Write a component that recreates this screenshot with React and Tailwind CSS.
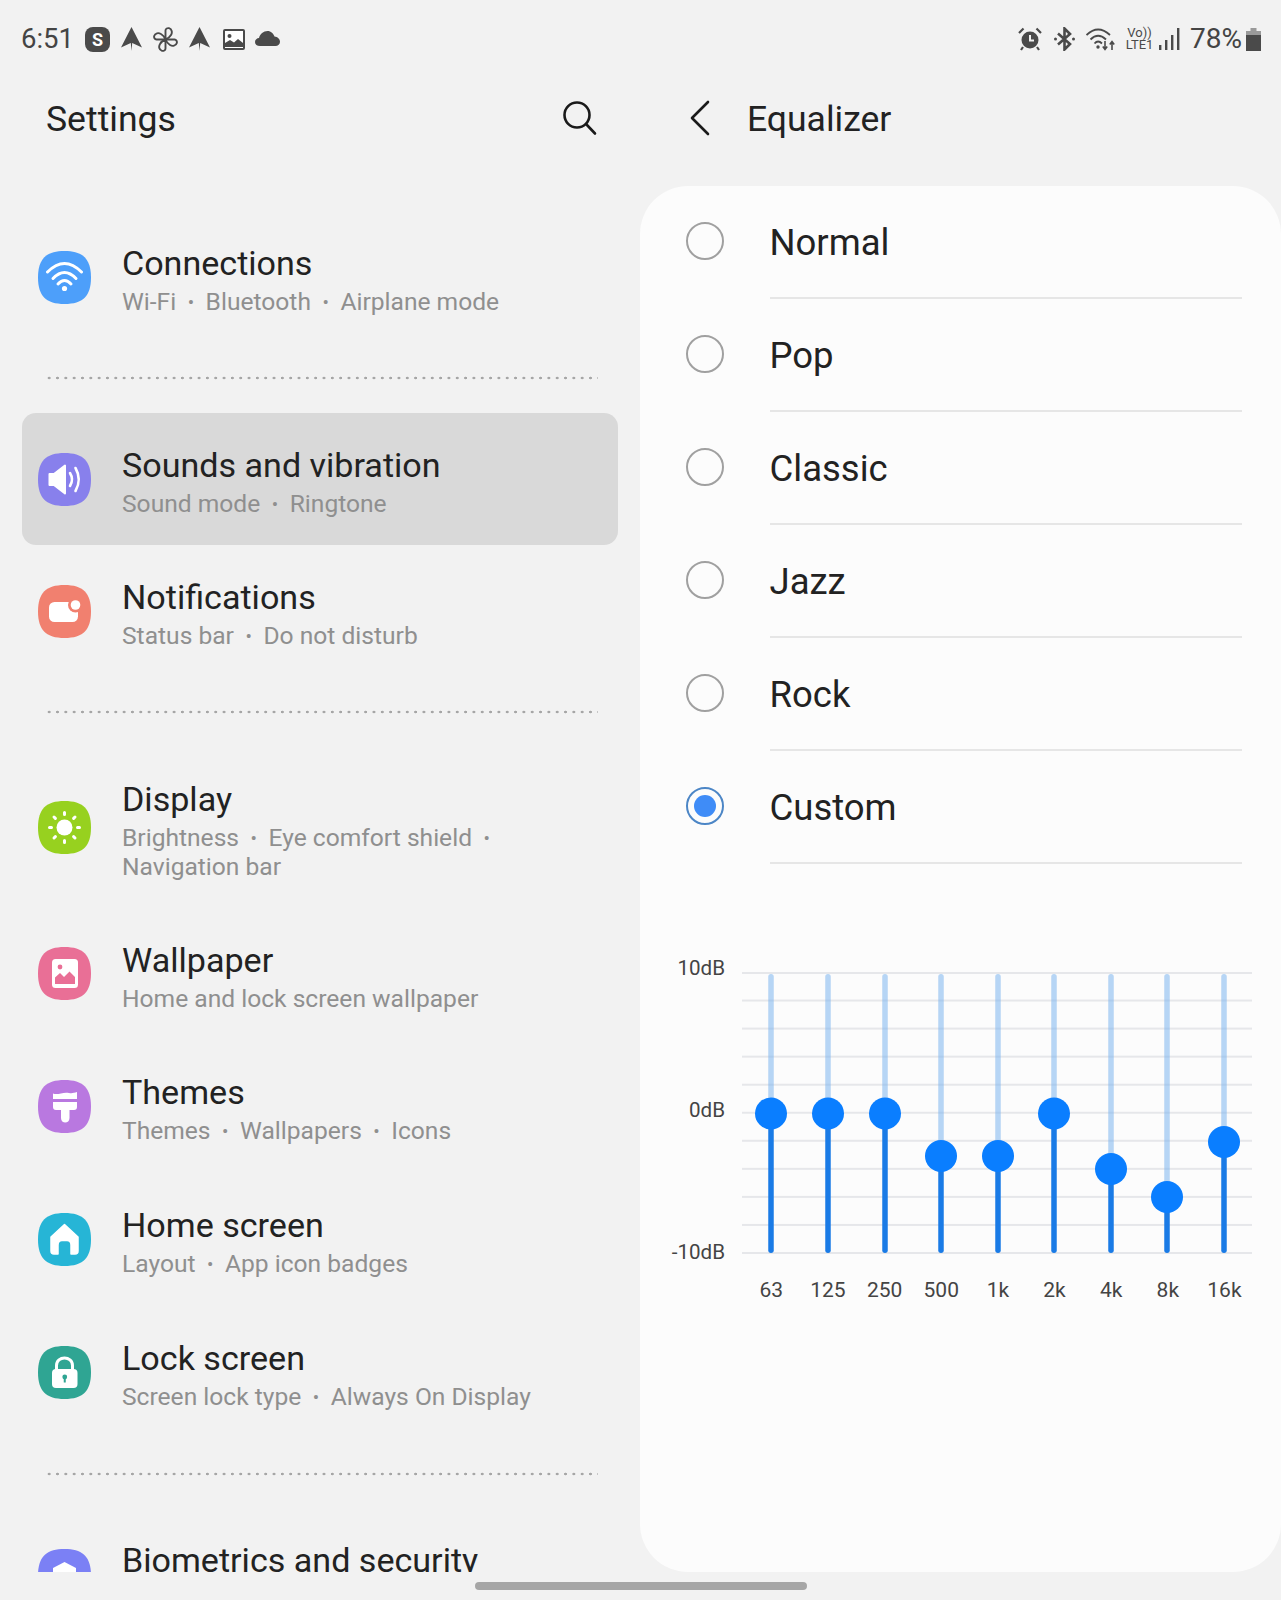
import React from "react";

const Squircle = ({ fill, children }) => (
  <svg width="53" height="53" viewBox="0 0 53 53" className="shrink-0">
    <path d="M26.5 0C45 0 53 8 53 26.5C53 45 45 53 26.5 53C8 53 0 45 0 26.5C0 8 8 0 26.5 0Z" fill={fill} />
    {children}
  </svg>
);

const icons = {
  wifi: (
    <Squircle fill="#4d9ffa">
      <g fill="none" stroke="#fff" strokeWidth="3" strokeLinecap="round">
        <path d="M9.5 21Q26.5 4 43.5 21" />
        <path d="M15 27.5Q26.5 15.5 38 27.5" />
        <path d="M20 33Q26.5 26 33 33" />
      </g>
      <circle cx="26.5" cy="37.5" r="2.6" fill="#fff" />
    </Squircle>
  ),
  sound: (
    <Squircle fill="#8880ec">
      <path d="M11.5 21H16L27 12.5V40.5L16 32H11.5Z" fill="#fff" stroke="#fff" strokeWidth="2" strokeLinejoin="round" />
      <g fill="none" stroke="#fff" strokeWidth="2.6" strokeLinecap="round">
        <path d="M32 20Q36 26.5 32 33" />
        <path d="M37.5 15Q44 26.5 37.5 38" />
      </g>
    </Squircle>
  ),
  notif: (
    <Squircle fill="#f1806f">
      <rect x="11" y="17" width="29" height="20" rx="5.5" fill="#fff" />
      <circle cx="37.5" cy="20" r="7.5" fill="#f1806f" />
      <circle cx="37.5" cy="20" r="4.8" fill="#fff" />
    </Squircle>
  ),
  display: (
    <Squircle fill="#97d11f">
      <circle cx="26.5" cy="26.5" r="8" fill="#fff" />
      <g stroke="#fff" strokeWidth="3" strokeLinecap="round">
        <path d="M26.5 11.5V13.5M26.5 39.5V41.5M11.5 26.5H13.5M39.5 26.5H41.5M16 16L17.4 17.4M35.6 35.6L37 37M37 16L35.6 17.4M17.4 35.6L16 37" />
      </g>
    </Squircle>
  ),
  wallpaper: (
    <Squircle fill="#e96f96">
      <rect x="14" y="12" width="26" height="29" rx="3.5" fill="#fff" />
      <circle cx="22" cy="20" r="2.4" fill="#e96f96" />
      <path d="M17 37V30.5L22 26L26 30L31.5 24.5L37 30V37Z" fill="#e96f96" />
    </Squircle>
  ),
  themes: (
    <Squircle fill="#b978e0">
      <path d="M15 13.5C20 15.5 25 11.5 31 13C34 13.5 36 13 39 12V19H15Z" fill="#fff" />
      <path d="M15 22H39V27C39 29 38 30 36 30H31.5V38C31.5 44 23 44 23 38V30H18C16 30 15 29 15 27Z" fill="#fff" />
    </Squircle>
  ),
  home: (
    <Squircle fill="#26b5d6">
      <path d="M26.5 11.5L40 24V38C40 40 39 41 37 41H33V32C33 29 31 27.5 29 27.5H24C22 27.5 20 29 20 32V41H16C14 41 13 40 13 38V24Z" fill="#fff" stroke="#fff" strokeWidth="1.5" strokeLinejoin="round" />
    </Squircle>
  ),
  lock: (
    <Squircle fill="#2fa593">
      <path d="M18.5 24V19.5C18.5 9.5 34.5 9.5 34.5 19.5V24" fill="none" stroke="#fff" strokeWidth="3" />
      <rect x="14" y="23" width="25.5" height="19" rx="4" fill="#fff" />
      <circle cx="26.75" cy="31" r="2.4" fill="#2fa593" />
      <rect x="25.75" y="31" width="2" height="5.5" fill="#2fa593" />
    </Squircle>
  ),
  bio: (
    <Squircle fill="#7b80f5">
      <path d="M15 19L26.5 13L38 19V53H15Z" fill="#fff" />
    </Squircle>
  ),
};

const Dots = () => (
  <div className="h-[4px] ml-[45px] w-[553px] bg-[radial-gradient(circle,#a6a6a6_1.2px,transparent_1.6px)] bg-[length:8.33px_4px]" />
);

const Sub = ({ parts }) => (
  <>
    {parts.map((p, i) => (
      <span key={i}>
        {i > 0 && <span className="mx-[11.5px] text-[19px] align-[1px]">•</span>}
        {p}
      </span>
    ))}
  </>
);

const Row = ({ icon, title, parts, h = "h-[133px]", active }) => (
  <div className={`ml-[22px] w-[596px] shrink-0 pl-[16px] flex items-center gap-[31px] rounded-[14px] ${h} ${active ? "bg-[#d9d9d9]" : ""}`}>
    {icons[icon]}
    <div className="min-w-0">
      <div className="text-[34.1px] leading-[50px] text-[#222] whitespace-nowrap">{title}</div>
      <div className="text-[24.6px] leading-[28px] text-[#8f8f8f] whitespace-nowrap">
        <Sub parts={parts} />
      </div>
    </div>
  </div>
);

const presets = ["Normal", "Pop", "Classic", "Jazz", "Rock", "Custom"];
const bands = [
  ["63", 771, 1113.5],
  ["125", 828, 1113.5],
  ["250", 885, 1113.5],
  ["500", 941, 1156],
  ["1k", 998, 1156],
  ["2k", 1054, 1113.5],
  ["4k", 1111, 1169],
  ["8k", 1167, 1197],
  ["16k", 1224, 1142],
];
const gridY = [0, 1, 2, 3, 4, 5, 6, 7, 8, 9, 10];

const Chart = () => (
  <svg width="511" height="284" viewBox="0 0 511 284" className="shrink-0">
    {gridY.map((i) => (
      <rect key={i} x="0" y={i === 0 ? 0 : i * 28.05 - 0.5} width="510" height="2" fill="#e6e7ea" />
    ))}
    {bands.map(([label, x, y]) => {
      const cx = x - 742;
      const cy = y - 972;
      return (
        <g key={label}>
          <rect x={cx - 2.75} y="2" width="5.5" height={cy} rx="2.75" fill="#7cb4ee" opacity="0.55" />
          <rect x={cx - 2.75} y={cy} width="5.5" height={281 - cy} rx="2.75" fill="#1a7be6" />
          <circle cx={cx} cy={cy} r="16" fill="#0a7eff" />
        </g>
      );
    })}
  </svg>
);

const Arrow = () => (
  <svg width="21" height="24" viewBox="0 0 21 24" className="shrink-0">
    <path d="M10.5 0L21 20.5L11.2 16L10.5 24L9.8 16L0 20.5Z" fill="#4a4a4a" />
  </svg>
);

const Pinwheel = () => (
  <svg width="25" height="25" viewBox="0 0 25 25" className="shrink-0">
    <g fill="none" stroke="#4a4a4a" strokeWidth="1.9" strokeLinejoin="round">
      {[0, 90, 180, 270].map((r) => (
        <path key={r} transform={`rotate(${r} 12.5 12.5)`} d="M12.5 12.5V3.5C12.5 1.6 14.5 0.8 16 1.2C19 2 19.5 5.5 18 8C17 9.8 15 11.5 12.5 12.5Z" />
      ))}
    </g>
  </svg>
);

export default function App() {
  return (
    <div className="w-[1281px] h-[1600px] bg-[#f2f2f2] overflow-hidden flex flex-col font-['Roboto',sans-serif]">
      <div className="h-[1572px] shrink-0 flex flex-col overflow-hidden">
        {/* status bar */}
        <div className="h-[78px] shrink-0 flex items-center justify-between pl-[21px] pr-[20px]">
          <div className="flex items-center">
            <span className="text-[27.5px] leading-none text-[#444] w-[64px]">6:51</span>
            <span className="w-[25px] h-[25px] rounded-[8px] bg-[#4a4a4a] text-white text-[18px] font-bold leading-[25px] text-center">S</span>
            <span className="ml-[11px]"><Arrow /></span>
            <span className="ml-[11px]"><Pinwheel /></span>
            <span className="ml-[11px]"><Arrow /></span>
            <svg width="22" height="21" viewBox="0 0 22 21" className="ml-[13px] shrink-0">
              <rect x="1" y="1" width="20" height="19" rx="1" fill="#fff" stroke="#4a4a4a" strokeWidth="2" />
              <circle cx="6.5" cy="7" r="2" fill="#4a4a4a" />
              <path d="M2 18V14L7 11L11 13.5L15 10L20 14V18Z" fill="#4a4a4a" />
            </svg>
            <svg width="25" height="15" viewBox="0 0 25 15" className="ml-[10px] -mt-[2px] shrink-0">
              <path d="M5 15C2 15 0 13.5 0 11C0 8.5 2 7.2 4 7C5 3 8.5 0 12.5 0C16 0 18.5 2.5 19.5 5.5C22.5 5.8 25 8 25 10.8C25 13.5 23 15 20.5 15Z" fill="#4a4a4a" />
            </svg>
          </div>
          <div className="flex items-center">
            <svg width="24" height="24" viewBox="0 0 24 24" className="shrink-0">
              <circle cx="12" cy="13" r="8.5" fill="#4a4a4a" />
              <path d="M12 8V13.5H16" fill="none" stroke="#f2f2f2" strokeWidth="2" />
              <path d="M1 6L5.5 1.5M23 6L18.5 1.5M5 20L3 23M19 20L21 23" stroke="#4a4a4a" strokeWidth="2.2" fill="none" />
            </svg>
            <svg width="21" height="24" viewBox="0 0 21 24" className="ml-[12px] shrink-0">
              <path d="M4 6.5L16 17L10.5 22.5V1.5L16 7L4 17.5" fill="none" stroke="#4a4a4a" strokeWidth="2.6" />
              <circle cx="1.5" cy="12" r="1.5" fill="#4a4a4a" />
              <circle cx="19.5" cy="12" r="1.5" fill="#4a4a4a" />
            </svg>
            <svg width="30" height="24" viewBox="0 0 30 24" className="ml-[11px] shrink-0">
              <g fill="none" stroke="#4a4a4a" strokeWidth="1.8">
                <path d="M0.5 8Q12 -3 24 8" />
                <path d="M4.5 12.5Q12 5 20 12.5" />
                <path d="M8.5 16.5Q12 12.5 16 16.5" />
              </g>
              <circle cx="12" cy="20" r="1.7" fill="#4a4a4a" />
              <path d="M19 14V22M16.8 19.5L19 22.5L21.2 19.5M26 23V15M23.8 17.5L26 14.5L28.2 17.5" fill="none" stroke="#4a4a4a" strokeWidth="1.6" />
            </svg>
            <div className="ml-[9px] w-[29px] text-[#4a4a4a] text-[13px] leading-[12px] font-normal text-center">
              <div>Vo))</div>
              <div>LTE1</div>
            </div>
            <svg width="21" height="22" viewBox="0 0 21 22" className="ml-[5px] shrink-0">
              <rect x="0" y="17" width="2.4" height="5" fill="#4a4a4a" />
              <rect x="6" y="12" width="2.4" height="10" fill="#4a4a4a" />
              <rect x="12" y="7" width="2.4" height="15" fill="#4a4a4a" />
              <rect x="18" y="0" width="2.4" height="22" fill="#4a4a4a" />
            </svg>
            <span className="ml-[10px] text-[28px] leading-none text-[#444] w-[56px]">78%</span>
            <svg width="15" height="23" viewBox="0 0 15 23" className="shrink-0">
              <rect x="4.5" y="0" width="6" height="4" fill="#9a9a9a" />
              <rect x="0" y="3" width="15" height="4" fill="#9a9a9a" />
              <rect x="0" y="7" width="15" height="16" fill="#4a4a4a" />
            </svg>
          </div>
        </div>

        <div className="flex-1 flex min-h-0">
          {/* left column */}
          <div className="w-[640px] shrink-0 flex flex-col">
            <div className="h-[80px] shrink-0 flex items-center justify-between pl-[46px] pr-[42px]">
              <span className="text-[35.6px] leading-none text-[#222] mt-[3px]">Settings</span>
              <svg width="36" height="36" viewBox="0 0 36 36" fill="none" stroke="#1a1a1a" strokeWidth="2.6" strokeLinecap="round" className="shrink-0 -mt-[1px]">
                <circle cx="15" cy="15" r="12.5" />
                <path d="M24.5 24.5L33 33.5" />
              </svg>
            </div>
            <div className="h-[53px] shrink-0" />
            <Row icon="wifi" title="Connections" parts={["Wi-Fi", "Bluetooth", "Airplane mode"]} h="h-[132px]" />
            <div className="h-[70px] shrink-0 flex items-center"><Dots /></div>
            <Row icon="sound" title="Sounds and vibration" parts={["Sound mode", "Ringtone"]} h="h-[132px]" active />
            <Row icon="notif" title="Notifications" parts={["Status bar", "Do not disturb"]} h="h-[132px]" />
            <div className="h-[70px] shrink-0 flex items-center"><Dots /></div>
            <div className="ml-[22px] w-[596px] shrink-0 pl-[16px] flex items-center gap-[31px] h-[160px]">
              {icons.display}
              <div>
                <div className="text-[34.1px] leading-[50px] text-[#222]">Display</div>
                <div className="text-[24.6px] leading-[28px] text-[#8f8f8f]">
                  <Sub parts={["Brightness", "Eye comfort shield"]} />
                  <span className="ml-[11.5px] text-[19px] align-[1px]">•</span>
                  <br />
                  Navigation bar
                </div>
              </div>
            </div>
            <Row icon="wallpaper" title="Wallpaper" parts={["Home and lock screen wallpaper"]} />
            <Row icon="themes" title="Themes" parts={["Themes", "Wallpapers", "Icons"]} />
            <Row icon="home" title="Home screen" parts={["Layout", "App icon badges"]} />
            <Row icon="lock" title="Lock screen" parts={["Screen lock type", "Always On Display"]} />
            <div className="h-[70px] shrink-0 flex items-center"><Dots /></div>
            <div className="ml-[22px] w-[596px] pl-[16px] flex items-start gap-[31px] h-[133px] shrink-0 pt-[40px]">
              {icons.bio}
              <div className="text-[34.1px] leading-[50px] text-[#222] -mt-[14px]">Biometrics and security</div>
            </div>
          </div>

          {/* right column */}
          <div className="w-[641px] shrink-0 flex flex-col">
            <div className="h-[80px] shrink-0 flex items-center pl-[50px]">
              <svg width="20" height="36" viewBox="0 0 20 36" fill="none" stroke="#1a1a1a" strokeWidth="2.6" strokeLinecap="round" strokeLinejoin="round" className="shrink-0 -mt-[1px]">
                <path d="M18 2L2 18L18 34" />
              </svg>
              <span className="ml-[37px] text-[35.5px] leading-none text-[#222] mt-[3px]">Equalizer</span>
            </div>
            <div className="h-[28px] shrink-0" />
            <div className="flex-1 bg-[#fcfcfc] rounded-[48px] overflow-hidden">
              {presets.map((p) => {
                const on = p === "Custom";
                return (
                  <div key={p} className="h-[113px] flex items-center pl-[45.5px]">
                    <span className={`w-[38px] h-[38px] -mt-[3px] rounded-full border-2 shrink-0 flex items-center justify-center ${on ? "border-[#4c86c6]" : "border-[#a0a0a0]"}`}>
                      {on && <span className="w-[22px] h-[22px] rounded-full bg-[#3f8cf7]" />}
                    </span>
                    <div className="ml-[46px] w-[472px] h-full flex items-center border-b-2 border-[#e6e6e6] text-[36.5px] text-[#222] pt-[3px]">{p}</div>
                  </div>
                );
              })}
              <div className="mt-[108px] flex items-start">
                <div className="w-[85px] h-[308px] -mt-[16px] flex flex-col justify-between items-end text-[20.6px] leading-[24px] text-[#444]">
                  <span>10dB</span>
                  <span>0dB</span>
                  <span>-10dB</span>
                </div>
                <div className="ml-[17px]"><Chart /></div>
              </div>
              <div className="ml-[103px] mt-[14px] grid grid-cols-[repeat(9,56.65px)] text-[21px] leading-[24px] text-[#444] text-center">
                {bands.map(([label]) => (
                  <span key={label}>{label}</span>
                ))}
              </div>
            </div>
          </div>
        </div>
      </div>
      <div className="flex-1 flex justify-center pt-[10px]">
        <div className="w-[332px] h-[8px] rounded-full bg-[#a6a6a6]" />
      </div>
    </div>
  );
}
